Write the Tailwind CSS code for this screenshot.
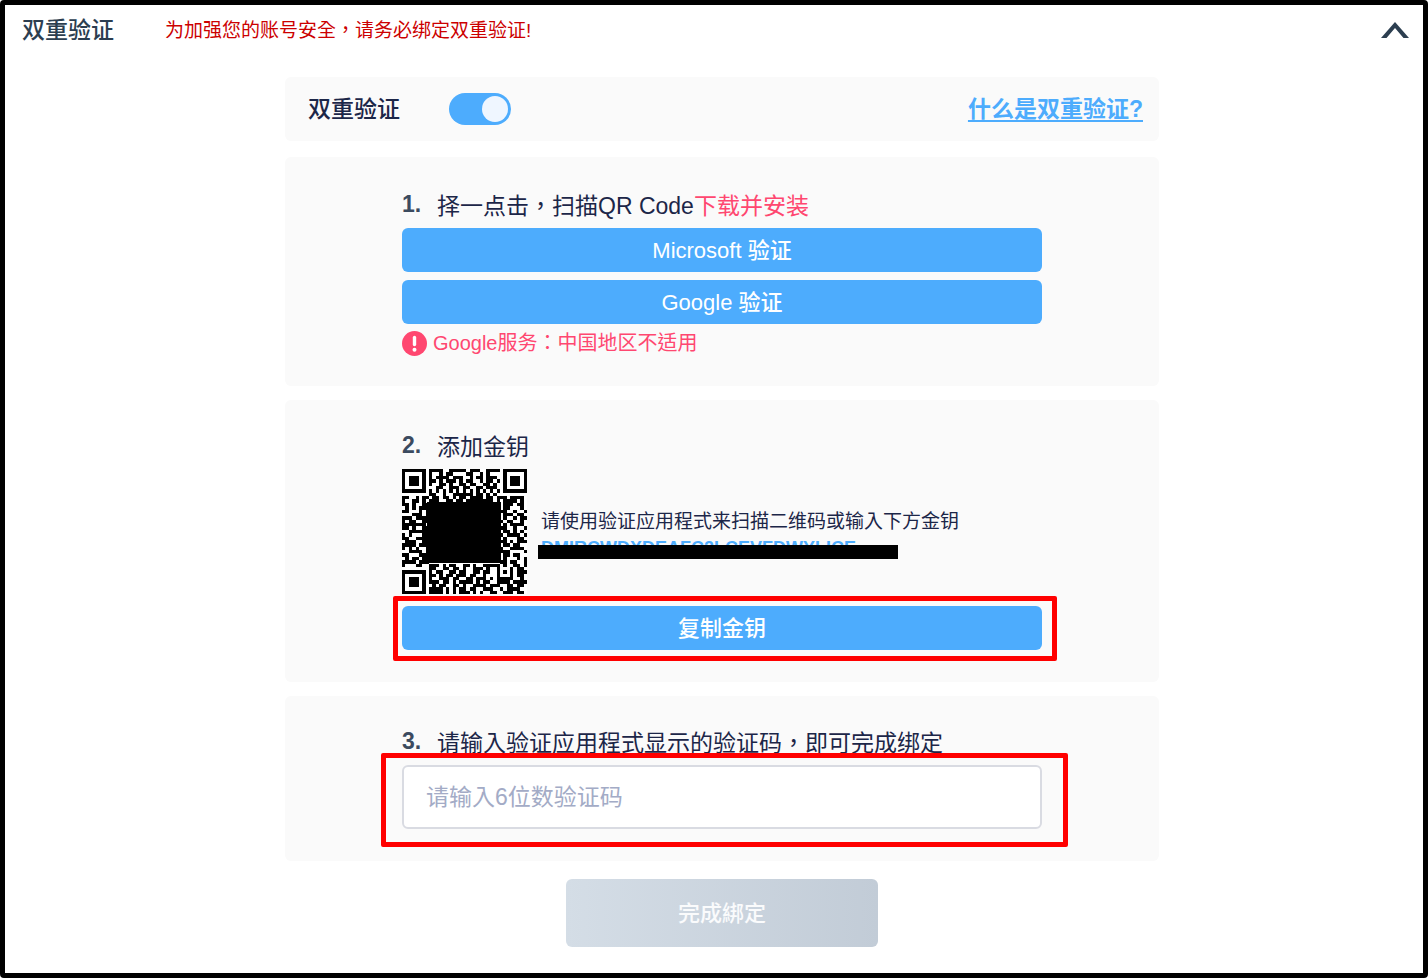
<!DOCTYPE html>
<html lang="zh-Hant">
  <head>
    <meta charset="UTF-8" />
    <meta name="viewport" content="width=device-width, initial-scale=1.0" />
    <script src="https://cdn.jsdelivr.net/npm/@tailwindcss/browser@4"></script>
    <title>双重验证</title>
  </head>
  <body class="bg-white font-['Liberation_Sans','Noto_Sans_CJK_TC',sans-serif] text-[23px] text-[#1c2648]">
    <div class="min-h-screen rounded-sm border-5 border-black pb-6">
      <header class="flex h-[50px] items-center pr-[14px] pl-[17px] text-[#2c3e50]">
        <h1 class="font-medium">双重验证</h1>
        <p class="ml-[51px] pt-[2px] text-[19px] text-[#cc0000]">为加强您的账号安全，请务必绑定双重验证!</p>
        <button type="button" class="ml-auto" aria-label="收起">
          <svg class="h-4 w-7" viewBox="0 0 28 16" fill="currentColor">
            <path d="M0 16 14 0l14 16h-5.500L14 6 5.500 16z" />
          </svg>
        </button>
      </header>

      <main class="mt-[22px] pl-4">
        <div class="mx-auto flex w-full max-w-[874px] flex-col gap-[14px]">
          <!-- switch -->
          <section class="mb-[2px] flex h-16 items-center rounded-md bg-[#fafafa] pr-4 pl-[23px]">
            <label for="two_factor" class="font-medium">双重验证</label>
            <input type="checkbox" role="switch" id="two_factor" checked
              class="ml-[49px] flex h-8 w-[62px] appearance-none items-center rounded-full bg-gray-300 px-[3px] before:size-[26px] before:rounded-full before:bg-[#eff6ff] checked:justify-end checked:bg-[#4dacfd]">
            <a href="#" class="ml-auto font-bold text-[#4dacfd] underline decoration-2 underline-offset-3">什么是双重验证?</a>
          </section>

          <!-- step 1 -->
          <section class="rounded-md bg-[#fafafa] pt-[31px] pb-6">
            <div class="mx-auto max-w-[640px]">
              <h2 class="flex h-9 items-center">
                <span class="w-[35px] pb-1 font-bold text-[#3b4a5f]">1.</span>
                <span>择一点击，扫描QR Code<span class="text-[#ff4770]">下载并安装</span></span>
              </h2>
              <div class="mt-1 flex flex-col gap-2 text-[22px] font-medium text-white">
                <button type="button" class="h-11 rounded-md bg-[#4dacfd]">Microsoft 验证</button>
                <button type="button" class="h-11 rounded-md bg-[#4dacfd]">Google 验证</button>
              </div>
              <p class="flex h-[38px] items-center gap-[6px] text-[20px] text-[#ff4770]">
                <svg class="size-[25px]" viewBox="0 0 25 25">
                  <circle cx="12.500" cy="12.500" r="12.500" fill="currentColor" />
                  <path d="M12.500 6.500v7" stroke="#fff" stroke-width="3.400" stroke-linecap="round" />
                  <circle cx="12.500" cy="18.700" r="2" fill="#fff" />
                </svg>
                Google服务：中国地区不适用
              </p>
            </div>
          </section>

          <!-- step 2 -->
          <section class="rounded-md bg-[#fafafa] pt-[29px] pb-8">
            <div class="mx-auto max-w-[640px]">
              <h2 class="flex h-9 items-center">
                <span class="w-[35px] pb-1 font-bold text-[#3b4a5f]">2.</span>
                <span>添加金钥</span>
              </h2>
              <div class="mt-1 flex items-center gap-[14px]">
                <div class="relative size-[125px] shrink-0 bg-white">
                  <svg class="size-full" viewBox="0 0 37 37" shape-rendering="crispEdges">
                    <path id="qr" fill="#000" />
                  </svg>
                  <div class="absolute top-[33px] left-[25px] h-[61px] w-[74px] bg-black"></div>
                </div>
                <div class="pt-2 text-[19px]">
                  <p class="leading-7">请使用验证应用程式来扫描二维码或输入下方金钥</p>
                  <div class="relative h-7">
                    <p class="text-[18px] leading-6 font-bold text-[#4dacfd]">DMIRCWDXDEAFC2LCEVFDWYLICE</p>
                    <div class="absolute top-[9px] -left-[3px] h-[14px] w-[360px] bg-black"></div>
                  </div>
                </div>
              </div>
              <div class="relative mt-3">
                <button type="button" class="h-11 w-full rounded-md bg-[#4dacfd] text-[22px] font-medium text-white">复制金钥</button>
                <div class="pointer-events-none absolute -top-[10px] -right-[15px] -bottom-[11px] -left-[9px] rounded-xs border-5 border-[#ff0000]"></div>
              </div>
            </div>
          </section>

          <!-- step 3 -->
          <section class="rounded-md bg-[#fafafa] pt-[29px] pb-8">
            <div class="mx-auto max-w-[640px]">
              <label for="code" class="flex h-9 items-center">
                <span class="w-[35px] pb-1 font-bold text-[#3b4a5f]">3.</span>
                <span>请输入验证应用程式显示的验证码，即可完成绑定</span>
              </label>
              <div class="relative mt-1">
                <input type="text" id="code" placeholder="请输入6位数验证码"
                  class="block h-16 w-full rounded-md border-2 border-[#d9dbe2] bg-white px-[22px] placeholder:text-[#a3abc6] focus:outline-none">
                <div class="pointer-events-none absolute -top-[12px] -right-[26px] -bottom-[18px] -left-[21px] rounded-xs border-5 border-[#ff0000]"></div>
              </div>
            </div>
          </section>
        </div>

        <button type="button" class="mx-auto mt-[18px] block h-[68px] w-[312px] rounded-md bg-linear-to-r from-[#d4dde6] to-[#c2ccd7] text-[22px] font-medium text-white/90">完成綁定</button>
      </main>
    </div>

    <script>
      // one string per module row, # is a dark module
      const rows = [
        "#######.####..#####.###..####.#######",
        "#.....#.#..#.##....##..#.#....#.....#",
        "#.###.#.#.####.###..#.##.###..#.###.#",
        "#.###.#.##.#.###.#.##..#.##.#.#.###.#",
        "#.###.#.#..##.#..##.##..##.#..#.###.#",
        "#.....#...##..###.##..##.###..#.....#",
        "#######.#.#.#.#.#.#.#.#.#.#.#.#######",
        "........##..#..######.##.#.#.........",
        "##..#.##.##.##.#.##.####.##.###.####.",
        "#..##.#.###..##.##.########.#.####.#.",
        "##.#..##......................###.##.",
        ".#.#.###......................##...#.",
        "##...#.#.....................##..#..#",
        "...###.##.....................###.##.",
        "###.####......................#..#.##",
        "#.##..##.....................#.##..#.",
        "#######.......................#.####.",
        "##.#..##.....................##..#..#",
        "..######......................##.#.#.",
        "#.#...##.....................#.####.#",
        "##..####......................#...##.",
        ".###..##.....................##.#.###",
        "####.###......................##.##..",
        "#.#.#..#.....................#..####.",
        "..####.#.....................###....#",
        "##...####.....................##.##..",
        ".#.##.##......................#...#.#",
        "####.###.....................##.##..#",
        "#...##..###.#.##..##.#..#####.#..##.#",
        "........##..##.##.#..###.#..#...#.##.",
        "#######.#.##..##.##..##.##..#.#.#.###",
        "#.....#.##.#.##.###.##..#...#...#.##.",
        "#.###.#.#..###.##..##.###.#.#####..#.",
        "#.###.#.###.##.#.####.#.##..####.####",
        "#.###.#..#.##..##.#..####.###..##.##.",
        "#.....#.####.#.#.##.##..###..#.####..",
        "#######.####.#.#.###.#.#..##..###.##.",
      ];
      let d = "";
      rows.forEach((row, y) => {
        for (let x = 0; x < row.length; x++) {
          if (row[x] === "#") d += `M${x} ${y}h1v1h-1z`;
        }
      });
      document.getElementById("qr").setAttribute("d", d);
    </script>
  </body>
</html>
